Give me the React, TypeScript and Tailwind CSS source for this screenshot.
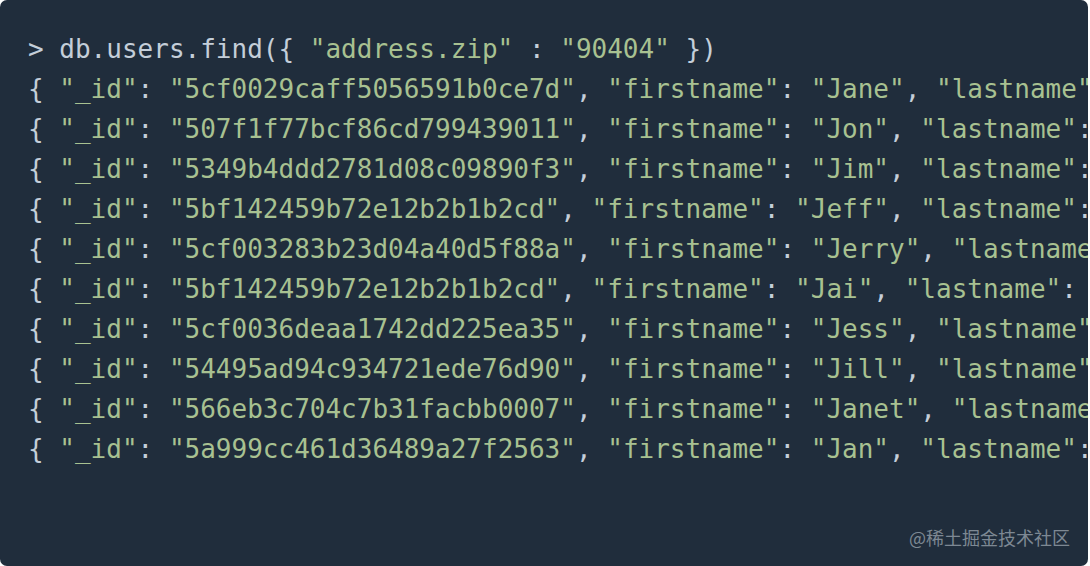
const rows = [
  ['5cf0029caff5056591b0ce7d', 'Jane'],
  ['507f1f77bcf86cd799439011', 'Jon'],
  ['5349b4ddd2781d08c09890f3', 'Jim'],
  ['5bf142459b72e12b2b1b2cd', 'Jeff'],
  ['5cf003283b23d04a40d5f88a', 'Jerry'],
  ['5bf142459b72e12b2b1b2cd', 'Jai'],
  ['5cf0036deaa1742dd225ea35', 'Jess'],
  ['54495ad94c934721ede76d90', 'Jill'],
  ['566eb3c704c7b31facbb0007', 'Janet'],
  ['5a999cc461d36489a27f2563', 'Jan'],
]

function Str({ children }: { children: string }) {
  return <span className="text-[#a8c191]">"{children}"</span>
}

export default function App() {
  return (
    <div className="h-[566px] w-[1090px] bg-white">
      <div className="relative h-full w-[1088px] overflow-hidden rounded-[7px] bg-[#202d3c] pt-[29px] pl-[28px] font-['DejaVu_Sans_Mono',monospace] text-[26px] leading-[40px] text-[#c4ced9]">
        <div className="whitespace-pre">
          {'> db.users.find({ '}
          <Str>address.zip</Str>
          {' : '}
          <Str>90404</Str>
          {' })'}
        </div>
        {rows.map(([id, name], i) => (
          <div key={i} className="whitespace-pre">
            {'{ '}
            <Str>_id</Str>
            {': '}
            <Str>{id}</Str>
            {', '}
            <Str>firstname</Str>
            {': '}
            <Str>{name}</Str>
            {', '}
            <Str>lastname</Str>
            {': '}
            <Str>Doe</Str>
            {' }'}
          </div>
        ))}
        <div className="absolute right-[18px] bottom-[17px] font-['Noto_Sans_CJK_SC',sans-serif] text-[18px] leading-[24px] text-[#7d8893]">
          @稀土掘金技术社区
        </div>
      </div>
    </div>
  )
}
